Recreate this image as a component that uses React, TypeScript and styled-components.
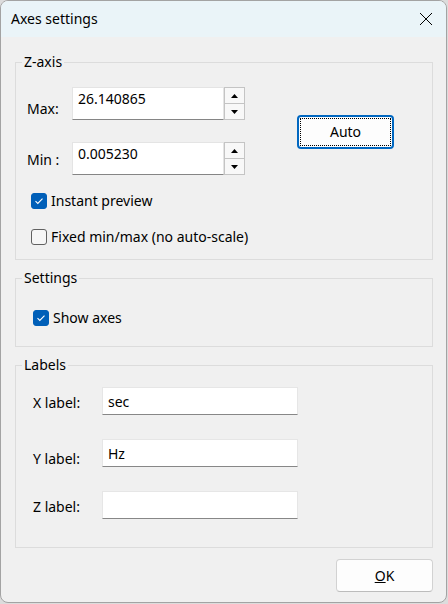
import { Fragment } from 'react';
import styled, { createGlobalStyle } from 'styled-components';

const GlobalStyle = createGlobalStyle`
    html, body {
        margin: 0;
        padding: 0;
        background: #dcdcdc;
    }
    body {
        font-family: "Noto Sans", "Open Sans", sans-serif;
        font-size: 14px;
        color: #000;
    }
`;

const Window = styled.div`
    width: 447px;
    height: 603px;
    box-sizing: border-box;
    border: 1px solid #a3a3a3;
    border-radius: 8px;
    overflow: hidden;
    background: #f0f0f0;
    display: flex;
    flex-direction: column;
`;

const TitleBar = styled.div`
    height: 36px;
    flex: none;
    display: flex;
    align-items: center;
    justify-content: space-between;
    padding: 0 13px 0 10px;
    background: #eaf4f8;
`;

const Title = styled.span`
    font-size: 14px;
    line-height: 20px;
`;

const Body = styled.div`
    flex: 1;
    display: flex;
    flex-direction: column;
    gap: 8px;
    padding: 15px 13px 0 14px;
`;

const GroupBox = styled.fieldset<{ $pt: number; $pb: number }>`
    margin: 0;
    min-width: 0;
    border: 1px solid #dcdcdc;
    padding: ${props => props.$pt}px 8px ${props => props.$pb}px 8px;
`;

const Legend = styled.legend`
    padding: 0 2px;
    margin-left: -2px;
    font-size: 14px;
    line-height: 20px;
`;

const Stack = styled.div<{ $gap: number }>`
    display: flex;
    flex-direction: column;
    gap: ${props => props.$gap}px;
`;

const RangeGrid = styled.div`
    display: grid;
    grid-template-columns: 45px 173px 1fr;
    grid-template-rows: 33px 33px;
    row-gap: 22px;
    margin-left: 3px;
`;

const FieldLabel = styled.label<{ $top: number }>`
    align-self: start;
    padding-top: ${props => props.$top}px;
    line-height: 20px;
    white-space: pre;
`;

const NumberField = styled.div`
    display: flex;
    height: 33px;
`;

const NumberInput = styled.input`
    width: 152px;
    height: 33px;
    box-sizing: border-box;
    border: 1px solid #e4e4e4;
    border-bottom-color: #858585;
    background: #fff;
    padding: 1px 5px 11px;
    font: inherit;
    font-size: 14px;
    color: #000;
    outline: none;
`;

const Spinner = styled.div`
    width: 21px;
    display: flex;
    flex-direction: column;
`;

const SpinButton = styled.div`
    flex: 1;
    box-sizing: border-box;
    border: 1px solid #c4c4c4;
    background: #f8f8f8;
    display: flex;
    align-items: center;
    justify-content: center;
    & + & {
        border-top: none;
    }
`;

const AutoButton = styled.button`
    grid-column: 3;
    grid-row: 1 / span 2;
    align-self: center;
    justify-self: start;
    margin-left: 52px;
    margin-top: 1px;
    position: relative;
    width: 97px;
    height: 34px;
    border: 2px solid #0067c0;
    border-radius: 4px;
    background: #fdfdfd;
    font: inherit;
    font-size: 14px;
    color: #000;
    padding: 0;
    &::after {
        content: '';
        position: absolute;
        inset: 1px;
        border: 1px dotted #000;
    }
`;

const CheckRow = styled.label<{ $indent: number }>`
    display: flex;
    align-items: center;
    gap: 4px;
    height: 21px;
    margin-left: ${props => props.$indent}px;
    line-height: 20px;
`;

const CheckBox = styled.span<{ $checked: boolean }>`
    width: 16px;
    height: 16px;
    box-sizing: border-box;
    border-radius: 3px;
    display: flex;
    align-items: center;
    justify-content: center;
    background: ${props => (props.$checked ? '#005fb8' : '#f6f6f6')};
    border: 1px solid ${props => (props.$checked ? '#005fb8' : '#616161')};
`;

const LabelsGrid = styled.div`
    display: grid;
    grid-template-columns: 69px 196px;
    grid-auto-rows: 28px;
    row-gap: 24px;
    margin-left: 9px;
`;

const TextInput = styled.input`
    width: 196px;
    height: 28px;
    box-sizing: border-box;
    border: 1px solid #e6e6e6;
    border-bottom-color: #878787;
    background: #fff;
    padding: 0 5px;
    font: inherit;
    font-size: 14px;
    color: #000;
    outline: none;
`;

const Footer = styled.div`
    display: flex;
    justify-content: flex-end;
    margin-top: 3px;
`;

const OkButton = styled.button`
    width: 97px;
    height: 33px;
    border: 1px solid #d2d2d2;
    border-bottom-color: #bcbcbc;
    border-radius: 4px;
    background: #fdfdfd;
    font: inherit;
    font-size: 14px;
    color: #000;
    padding: 0;
`;

const Check = ({ checked }: { checked: boolean }) => (
    <CheckBox $checked={checked}>
        {checked && (
            <svg width="10" height="10" viewBox="0 0 10 10">
                <polyline points="1.5,5.2 3.8,7.4 8.5,2.6" fill="none" stroke="#fff" strokeWidth="1.1" />
            </svg>
        )}
    </CheckBox>
);

const Arrow = ({ up }: { up: boolean }) => (
    <svg width="7" height="4" viewBox="0 0 7 4">
        <polygon points={up ? '0,4 7,4 3.5,0' : '0,0 7,0 3.5,4'} fill="#000" />
    </svg>
);

const SpinBox = ({ value }: { value: string }) => (
    <NumberField>
        <NumberInput readOnly defaultValue={value} />
        <Spinner>
            <SpinButton>
                <Arrow up />
            </SpinButton>
            <SpinButton>
                <Arrow up={false} />
            </SpinButton>
        </Spinner>
    </NumberField>
);

const labelRows = [
    { name: 'X label:', value: 'sec', top: 6 },
    { name: 'Y label:', value: 'Hz', top: 10 },
    { name: 'Z label:', value: '', top: 6 },
];

const App = () => {
    return (
        <>
            <GlobalStyle />
            <Window>
                <TitleBar>
                    <Title>Axes settings</Title>
                    <svg width="14" height="14" viewBox="0 0 14 14">
                        <path d="M1 1 L13 13 M13 1 L1 13" stroke="#000" strokeWidth="1" />
                    </svg>
                </TitleBar>
                <Body>
                    <GroupBox $pt={15} $pb={12}>
                        <Legend>Z-axis</Legend>
                        <Stack $gap={15}>
                            <RangeGrid>
                                <FieldLabel $top={12}>Max:</FieldLabel>
                                <SpinBox value="26.140865" />
                                <AutoButton>Auto</AutoButton>
                                <FieldLabel $top={8}>Min :</FieldLabel>
                                <SpinBox value="0.005230" />
                            </RangeGrid>
                            <CheckRow $indent={7}>
                                <Check checked />
                                Instant preview
                            </CheckRow>
                            <CheckRow $indent={7}>
                                <Check checked={false} />
                                Fixed min/max (no auto-scale)
                            </CheckRow>
                        </Stack>
                    </GroupBox>
                    <GroupBox $pt={19} $pb={18}>
                        <Legend>Settings</Legend>
                        <CheckRow $indent={9}>
                            <Check checked />
                            Show axes
                        </CheckRow>
                    </GroupBox>
                    <GroupBox $pt={12} $pb={28}>
                        <Legend>Labels</Legend>
                        <LabelsGrid>
                            {labelRows.map(row => (
                                <Fragment key={row.name}>
                                    <FieldLabel $top={row.top}>{row.name}</FieldLabel>
                                    <TextInput readOnly defaultValue={row.value} />
                                </Fragment>
                            ))}
                        </LabelsGrid>
                    </GroupBox>
                    <Footer>
                        <OkButton>
                            <u>O</u>K
                        </OkButton>
                    </Footer>
                </Body>
            </Window>
        </>
    );
};

export default App;
